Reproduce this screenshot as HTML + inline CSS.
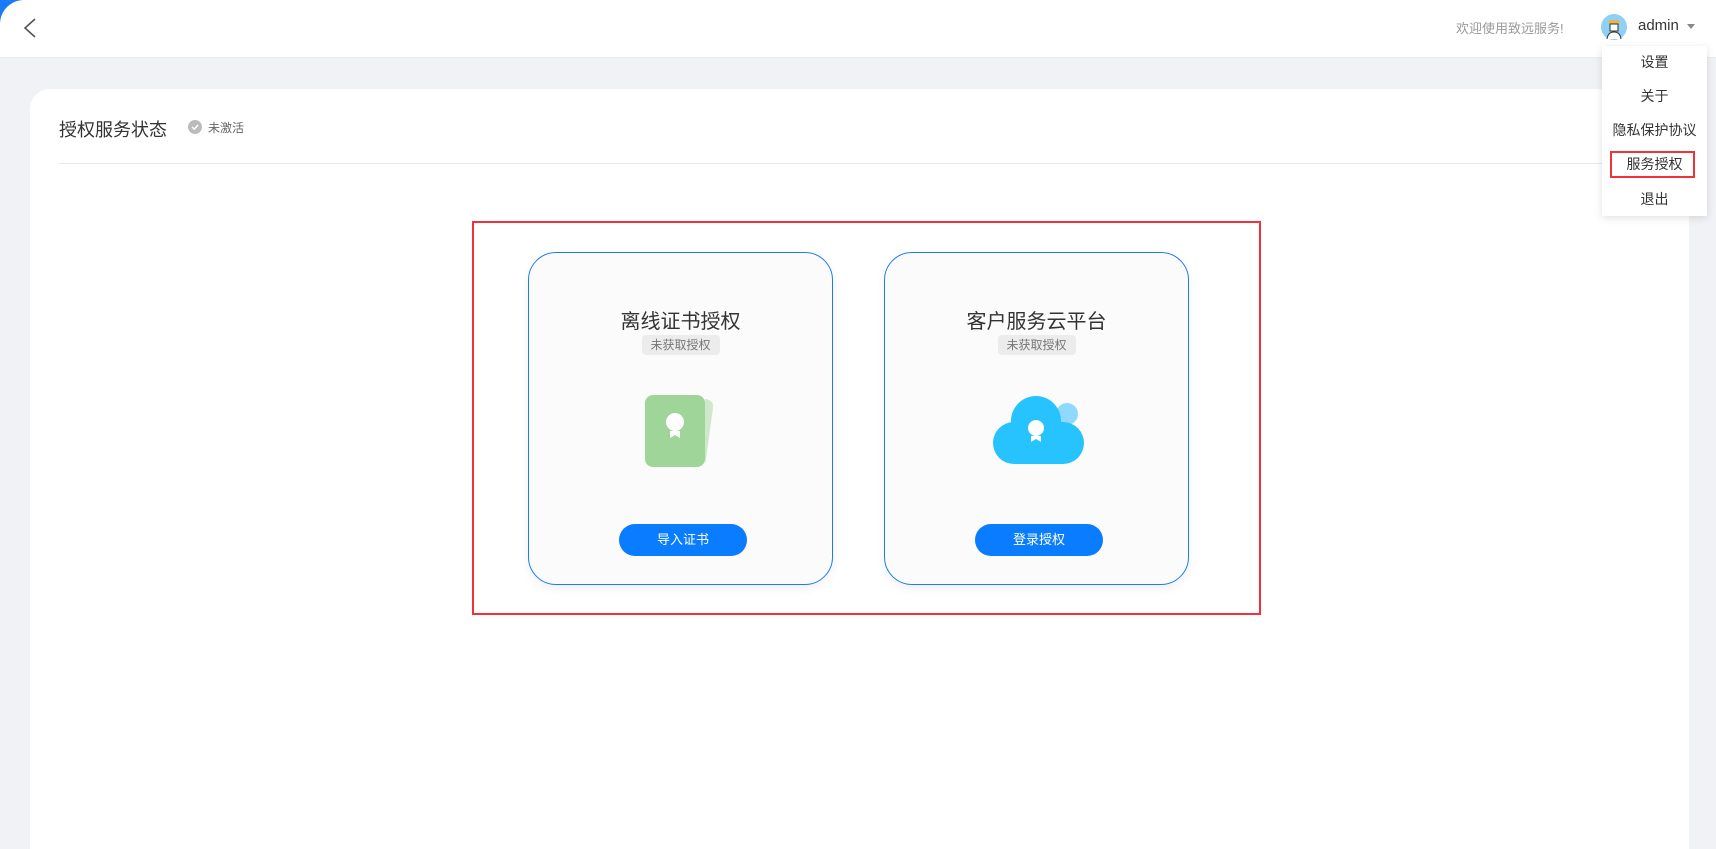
<!DOCTYPE html>
<html><head><meta charset="utf-8"><style>
*{margin:0;padding:0;box-sizing:border-box}
body{width:1716px;height:829px;overflow:hidden;background:#f0f2f5;font-family:"Liberation Sans","Noto Sans CJK SC",sans-serif;position:relative}
.hdr{position:absolute;left:0;top:0;width:1716px;height:58px;background:#fff;border-bottom:1px solid #e8eaee;border-top-left-radius:24px}
.abs{position:absolute}
.panel{position:absolute;left:30px;top:89px;width:1659px;height:760px;background:#fff;border-radius:20px 20px 0 0}
.card{position:absolute;top:252px;width:305px;height:333px;border:1px solid #1a7cf5;border-radius:28px;background:#fbfbfb;box-shadow:0 4px 10px rgba(0,0,0,.06);text-align:center}
.card h3{position:absolute;top:52px;width:100%;font-weight:normal;font-size:20px;color:#333}
.badge{position:absolute;top:82px;left:50%;transform:translateX(-50%);background:#ececec;color:#777;font-size:12px;padding:1px 9px;border-radius:4px;line-height:18px}
.btn{position:absolute;left:90px;top:271px;width:128px;height:32px;border-radius:16px;background:#0a7cff;color:#fff;font-size:13px;line-height:32px}
.menu{position:absolute;left:1602px;top:46px;width:105px;height:170px;background:#fff;box-shadow:0 2px 8px rgba(0,0,0,.12);font-size:14px;color:#333;text-align:center}
.menu div{position:absolute;width:100%;line-height:20px}
</style></head><body>
<div class="abs" style="left:0;top:0;width:24px;height:24px;background:#1a7cf5"></div>
<div class="hdr"></div>
<svg class="abs" style="left:20px;top:16px" width="20" height="24"><path d="M15 3 L5 12 L15 21" fill="none" stroke="#555" stroke-width="1.6"/></svg>
<div class="abs" style="left:1456px;top:18px;font-size:13px;color:#999">欢迎使用致远服务!</div>
<svg class="abs" style="left:1601px;top:14px" width="26" height="26"><circle cx="13" cy="13" r="13" fill="#8fd0f5"/><rect x="8" y="6" width="10" height="4" fill="#e6b84a"/><rect x="9" y="10" width="8" height="7" fill="#fff" stroke="#333" stroke-width="1"/><path d="M6 25 Q7 18 13 18 Q19 18 20 25" fill="#fff" stroke="#333" stroke-width="1"/></svg>
<div class="abs" style="left:1638px;top:17px;font-size:15px;color:#333">admin</div>
<div class="abs" style="left:1687px;top:24px;border:4px solid transparent;border-top:5px solid #888"></div>
<div class="panel"></div>
<div class="abs" style="left:59px;top:116px;font-size:18px;color:#333">授权服务状态</div>
<svg class="abs" style="left:188px;top:120px" width="14" height="14"><circle cx="7" cy="7" r="7" fill="#bbb"/><path d="M4 7 L6.3 9.2 L10 5" fill="none" stroke="#fff" stroke-width="1.5"/></svg>
<div class="abs" style="left:208px;top:119px;font-size:12px;color:#666">未激活</div>
<div class="abs" style="left:59px;top:163px;width:1630px;height:1px;background:#e8e8e8"></div>
<div class="abs" style="left:472px;top:221px;width:789px;height:394px;border:2px solid #f0333a"></div>
<div class="card" style="left:528px">
<h3>离线证书授权</h3><div class="badge">未获取授权</div>
<svg class="abs" style="left:110px;top:135px" width="90" height="90"><path d="M66 11 Q75 12 74 20 L66 78 Z" fill="#cfe8cc"/><rect x="6" y="7" width="60" height="72" rx="8" fill="#a0d59a"/><circle cx="36" cy="34" r="9" fill="#fff"/><path d="M31 43 L31 50 L36 47 L41 50 L41 43" fill="#fff"/></svg>
<div class="btn">导入证书</div>
</div>
<div class="card" style="left:884px">
<h3>客户服务云平台</h3><div class="badge">未获取授权</div>
<svg class="abs" style="left:100px;top:135px" width="110" height="90"><circle cx="82" cy="26" r="11" fill="#8fd9ff"/><circle cx="51" cy="33" r="25" fill="#26c3ff"/><rect x="8" y="34" width="91" height="42" rx="21" fill="#26c3ff"/><circle cx="51" cy="40" r="8" fill="#fff"/><path d="M46 48 L46 54 L51 51 L56 54 L56 48" fill="#fff"/></svg>
<div class="btn">登录授权</div>
</div>
<div class="menu">
<div style="top:6px">设置</div>
<div style="top:40px">关于</div>
<div style="top:74px">隐私保护协议</div>
<div style="top:108px">服务授权</div>
<div style="top:143px">退出</div>
</div>
<div class="abs" style="left:1610px;top:151px;width:85px;height:27px;border:2px solid #f0333a"></div>
</body></html>
